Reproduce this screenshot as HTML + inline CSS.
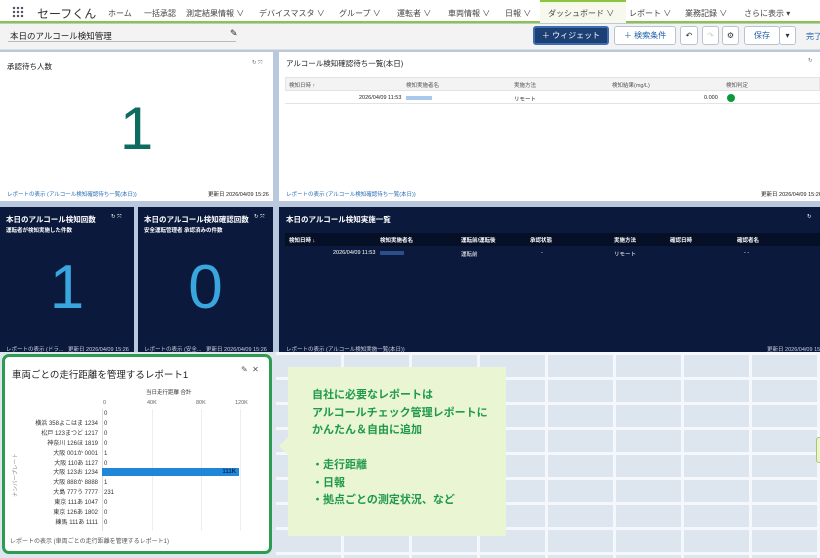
<!DOCTYPE html>
<html><head><meta charset="utf-8"><style>
*{box-sizing:border-box;margin:0;padding:0}
body{width:820px;height:558px;overflow:hidden;position:relative;background:#b9c8dc;font-family:"Liberation Sans","Noto Sans CJK JP",sans-serif;color:#222}
.a{position:absolute}
.nav{left:0;top:0;width:820px;height:23px;background:#fff;border-bottom:2px solid #8cc63f;font-size:8px;color:#444}
.nav span{position:absolute;top:8px;white-space:nowrap}
.bar2{left:0;top:24px;width:820px;height:26px;background:#f3f3f3;border-bottom:1px solid #ddd}
.btn{position:absolute;top:26px;height:19px;border:1px solid #b8c4d4;border-radius:3px;background:#fff;font-size:8px;color:#1b5fa8;text-align:center;line-height:17px;white-space:nowrap}
.w{background:#fff}
.d{background:#0b1a3c;color:#fff}
.t8{font-size:7.5px}
.sm{font-size:5.5px;white-space:nowrap}
.grid{left:276px;top:352px;width:544px;height:206px;background-color:#dde5ef;
background-image:linear-gradient(90deg,transparent 65px,#f4f7fb 65px,#f4f7fb 68px),linear-gradient(0deg,transparent 22px,#f4f7fb 22px,#f4f7fb 25px);
background-size:68px 206px,544px 25px;background-position:0 0,0 0}
</style></head><body>
<div class="a nav">
<div class="a" style="left:12px;top:6px;width:12px;height:12px;background:radial-gradient(circle,#556 1.1px,transparent 1.4px) 0 0/4px 4px"></div>
<span style="left:37px;top:5px;font-size:12px;color:#333">セーフくん</span>
<span style="left:108px">ホーム</span><span style="left:144px">一括承認</span><span style="left:186px">測定結果情報 ∨</span><span style="left:259px">デバイスマスタ ∨</span><span style="left:339px">グループ ∨</span><span style="left:397px">運転者 ∨</span><span style="left:448px">車両情報 ∨</span><span style="left:505px">日報 ∨</span>
<div class="a" style="left:540px;top:0;width:86px;height:23px;background:#f6f9ec;border-top:2px solid #8cc63f"></div>
<span style="left:548px">ダッシュボード ∨</span><span style="left:629px">レポート ∨</span><span style="left:685px">業務記録 ∨</span><span style="left:744px">さらに表示 ▾</span>
</div>
<div class="a bar2">
<div class="a" style="left:10px;top:6px;font-size:8.5px;color:#222">本日のアルコール検知管理</div>
<div class="a" style="left:8px;top:17px;width:228px;border-bottom:1px solid #bbb"></div>
<div class="a" style="left:230px;top:4px;font-size:9px">✎</div>
</div>
<div class="btn" style="left:533px;width:76px;background:#1c3f74;color:#fff;border:2px solid #3d6db0;line-height:15px">＋ ウィジェット</div>
<div class="btn" style="left:614px;width:62px">＋ 検索条件</div>
<div class="btn" style="left:680px;width:18px;color:#333">↶</div>
<div class="btn" style="left:702px;width:17px;color:#ccc">↷</div>
<div class="btn" style="left:722px;width:17px;color:#333">⚙</div>
<div class="btn" style="left:744px;width:36px">保存</div>
<div class="btn" style="left:779px;width:17px;color:#333">▾</div>
<div class="a" style="left:806px;top:31px;font-size:8px;color:#1b5fa8;white-space:nowrap">完了</div>

<!-- row1 -->
<div class="a w" style="left:0;top:52px;width:273px;height:149px">
<div class="a t8" style="left:7px;top:9px">承認待ち人数</div>
<div class="a sm" style="left:252px;top:8px;color:#666">↻ ⤧</div>
<div class="a" style="left:0;width:273px;top:47px;text-align:center;font-size:60px;color:#0d6b60;line-height:60px">1</div>
<div class="a sm" style="left:7px;top:138px;color:#2a6fb8">レポートの表示 (アルコール検知確認待ち一覧(本日))</div>
<div class="a sm" style="left:208px;top:138px">更新日 2026/04/09 15:26</div>
</div>
<div class="a w" style="left:279px;top:52px;width:541px;height:149px">
<div class="a t8" style="left:7px;top:6px">アルコール検知確認待ち一覧(本日)</div>
<div class="a sm" style="left:529px;top:6px;color:#666">↻</div>
<div class="a" style="left:6px;top:25px;width:535px;height:14px;background:#f3f3f3;border:1px solid #e3e3e3"></div>
<div class="a" style="left:6px;top:39px;width:535px;height:13px;border-bottom:1px solid #e3e3e3"></div>
<div class="a sm" style="left:10px;top:29px;color:#555">検知日時 ↑</div>
<div class="a sm" style="left:127px;top:29px;color:#555">検知実施者名</div>
<div class="a sm" style="left:235px;top:29px;color:#555">実施方法</div>
<div class="a sm" style="left:333px;top:29px;color:#555">検知結果(mg/L)</div>
<div class="a sm" style="left:447px;top:29px;color:#555">検知判定</div>
<div class="a sm" style="left:80px;top:43px">2026/04/09 11:53</div>
<div class="a" style="left:127px;top:44px;width:26px;height:4px;background:#a8c8ec"></div>
<div class="a sm" style="left:235px;top:43px">リモート</div>
<div class="a sm" style="left:425px;top:43px">0.000</div>
<div class="a" style="left:448px;top:42px;width:8px;height:8px;border-radius:50%;background:#0a9a3c"></div>
<div class="a sm" style="left:7px;top:138px;color:#2a6fb8">レポートの表示 (アルコール検知確認待ち一覧(本日))</div>
<div class="a sm" style="left:482px;top:138px">更新日 2026/04/09 15:26</div>
</div>

<!-- row2 -->
<div class="a d" style="left:0;top:207px;width:134px;height:145px">
<div class="a" style="left:6px;top:7px;font-size:7.5px;font-weight:bold">本日のアルコール検知回数</div>
<div class="a sm" style="left:6px;top:19px;font-weight:bold">運転者が検知実施した件数</div>
<div class="a sm" style="left:111px;top:7px">↻ ⤧</div>
<div class="a" style="left:0;width:134px;top:50px;text-align:center;font-size:62px;line-height:62px;color:#3aa6df">1</div>
<div class="a sm" style="left:6px;top:138px;color:#ccd">レポートの表示 (ドラ...</div>
<div class="a sm" style="left:68px;top:138px;color:#ccd">更新日 2026/04/09 15:26</div>
</div>
<div class="a d" style="left:138px;top:207px;width:135px;height:145px">
<div class="a" style="left:6px;top:7px;font-size:7.5px;font-weight:bold">本日のアルコール検知確認回数</div>
<div class="a sm" style="left:6px;top:19px;font-weight:bold">安全運転管理者 承認済みの件数</div>
<div class="a sm" style="left:116px;top:7px">↻ ⤧</div>
<div class="a" style="left:0;width:135px;top:50px;text-align:center;font-size:62px;line-height:62px;color:#3aa6df">0</div>
<div class="a sm" style="left:6px;top:138px;color:#ccd">レポートの表示 (安全...</div>
<div class="a sm" style="left:68px;top:138px;color:#ccd">更新日 2026/04/09 15:26</div>
</div>
<div class="a d" style="left:279px;top:207px;width:541px;height:145px">
<div class="a" style="left:7px;top:7px;font-size:7.5px;font-weight:bold">本日のアルコール検知実施一覧</div>
<div class="a sm" style="left:528px;top:7px">↻</div>
<div class="a" style="left:6px;top:26px;width:535px;height:13px;background:#050f26"></div>
<div class="a sm" style="left:10px;top:29px;font-weight:bold">検知日時 ↓</div>
<div class="a sm" style="left:101px;top:29px;font-weight:bold">検知実施者名</div>
<div class="a sm" style="left:182px;top:29px;font-weight:bold">運転前/運転後</div>
<div class="a sm" style="left:251px;top:29px;font-weight:bold">承認状態</div>
<div class="a sm" style="left:335px;top:29px;font-weight:bold">実施方法</div>
<div class="a sm" style="left:391px;top:29px;font-weight:bold">確認日時</div>
<div class="a sm" style="left:458px;top:29px;font-weight:bold">確認者名</div>
<div class="a sm" style="left:54px;top:43px">2026/04/09 11:53</div>
<div class="a" style="left:101px;top:44px;width:24px;height:4px;background:#2b4f8a"></div>
<div class="a sm" style="left:182px;top:43px">運転前</div>
<div class="a sm" style="left:262px;top:43px">-</div>
<div class="a sm" style="left:335px;top:43px">リモート</div>
<div class="a sm" style="left:465px;top:43px">- -</div>
<div class="a sm" style="left:7px;top:138px;color:#ccd">レポートの表示 (アルコール検知実施一覧(本日))</div>
<div class="a sm" style="left:488px;top:138px;color:#ccd">更新日 2026/04/09 15:26</div>
</div>

<!-- row3 -->
<div class="a" style="left:0;top:352px;width:276px;height:206px;background:#dde5ef"></div>
<div class="a grid"></div>
<div class="a" style="left:816px;top:437px;width:6px;height:26px;border:1px solid #a8c86a;border-radius:3px;background:#eaf5d3"></div>
<div class="a w" style="left:2px;top:354px;width:270px;height:200px;border:3px solid #2e9c50;border-radius:7px">
<div class="a" style="left:7px;top:10px;font-size:9.5px;color:#222">車両ごとの走行距離を管理するレポート1</div>
<div class="a" style="left:236px;top:8px;font-size:8px;color:#555">✎ &nbsp;✕</div>
<div class="a sm" style="left:141px;top:31px;color:#333">当日走行距離 合計</div>
<div class="a sm" style="left:98px;top:43px;color:#666">0</div>
<div class="a sm" style="left:142px;top:43px;color:#666">40K</div>
<div class="a sm" style="left:191px;top:43px;color:#666">80K</div>
<div class="a sm" style="left:230px;top:43px;color:#666">120K</div>
<div class="a" style="left:97px;top:52px;width:1px;height:122px;background:#ddd"></div>
<div class="a" style="left:147px;top:52px;width:1px;height:122px;background:#eee"></div>
<div class="a" style="left:196px;top:52px;width:1px;height:122px;background:#eee"></div>
<div class="a" style="left:235px;top:52px;width:1px;height:122px;background:#eee"></div>
<div class="a sm" style="left:6px;top:140px;transform:rotate(-90deg);transform-origin:0 0;color:#888">ナンバープレート</div>
<div class="a" style="left:0;top:53px;width:93px;text-align:right;font-size:6px;line-height:9.9px;color:#333">&nbsp;<br>横浜 358よこはま 1234<br>松戸 123まつど 1217<br>神奈川 126ほ 1819<br>大阪 001か 0001<br>大阪 110あ 1127<br>大阪 123お 1234<br>大阪 888か 8888<br>大島 777う 7777<br>東京 111あ 1047<br>東京 126あ 1802<br>練馬 111あ 1111</div>
<div class="a" style="left:99px;top:53px;font-size:6px;line-height:9.9px;color:#333">0<br>0<br>0<br>0<br>1<br>0<br><br>1<br>231<br>0<br>0<br>0</div>
<div class="a" style="left:97px;top:111px;width:137px;height:8px;background:#1f86d8;color:#0b2a55;font-size:6px;text-align:right;padding-right:3px;line-height:8px;font-weight:bold">111K</div>
<div class="a sm" style="left:5px;top:179px;color:#555;font-size:6px">レポートの表示 (車両ごとの走行距離を管理するレポート1)</div>
</div>
<div class="a" style="left:288px;top:367px;width:218px;height:169px;background:#eaf5d3"></div>
<div class="a" style="left:279px;top:436px;width:0;height:0;border-top:10px solid transparent;border-bottom:10px solid transparent;border-right:10px solid #eaf5d3"></div>
<div class="a" style="left:312px;top:387px;font-size:11px;line-height:17.5px;color:#1f9a4a;font-weight:bold;white-space:nowrap">自社に必要なレポートは<br>アルコールチェック管理レポートに<br>かんたん＆自由に追加<br><br>・走行距離<br>・日報<br>・拠点ごとの測定状況、など</div>
</body></html>
